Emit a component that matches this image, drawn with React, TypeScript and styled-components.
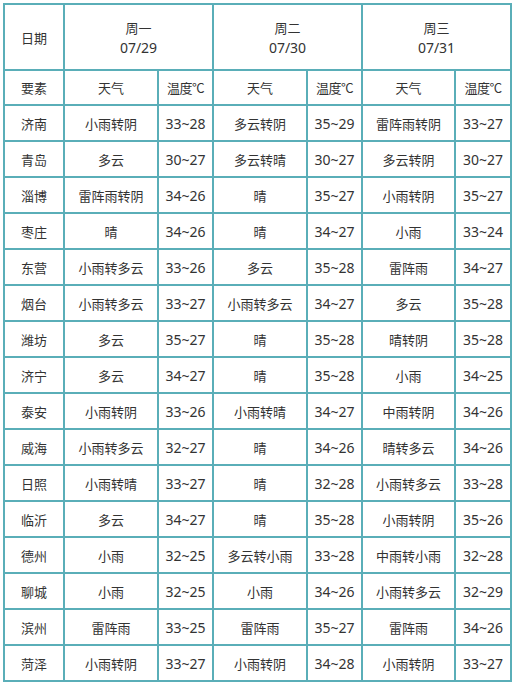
import React from 'react';
import styled, { createGlobalStyle } from 'styled-components';

const GlobalStyle = createGlobalStyle`
    html, body {
        margin: 0;
        padding: 0;
        background: #ffffff;
    }
    body {
        font-family: "Noto Sans CJK SC", "DejaVu Sans", sans-serif;
        color: #333333;
    }
`;

type Day = { week: string; date: string };

const days: Day[] = [
    { week: "周一", date: "07/29" },
    { week: "周二", date: "07/30" },
    { week: "周三", date: "07/31" },
];

const rows: [string, string[]][] = [
    ["济南", ["小雨转阴", "33~28", "多云转阴", "35~29", "雷阵雨转阴", "33~27"]],
    ["青岛", ["多云", "30~27", "多云转晴", "30~27", "多云转阴", "30~27"]],
    ["淄博", ["雷阵雨转阴", "34~26", "晴", "35~27", "小雨转阴", "35~27"]],
    ["枣庄", ["晴", "34~26", "晴", "34~27", "小雨", "33~24"]],
    ["东营", ["小雨转多云", "33~26", "多云", "35~28", "雷阵雨", "34~27"]],
    ["烟台", ["小雨转多云", "33~27", "小雨转多云", "34~27", "多云", "35~28"]],
    ["潍坊", ["多云", "35~27", "晴", "35~28", "晴转阴", "35~28"]],
    ["济宁", ["多云", "34~27", "晴", "35~28", "小雨", "34~25"]],
    ["泰安", ["小雨转阴", "33~26", "小雨转晴", "34~27", "中雨转阴", "34~26"]],
    ["威海", ["小雨转多云", "32~27", "晴", "34~26", "晴转多云", "34~26"]],
    ["日照", ["小雨转晴", "33~27", "晴", "32~28", "小雨转多云", "33~28"]],
    ["临沂", ["多云", "34~27", "晴", "35~28", "小雨转阴", "35~26"]],
    ["德州", ["小雨", "32~25", "多云转小雨", "33~28", "中雨转小雨", "32~28"]],
    ["聊城", ["小雨", "32~25", "小雨", "34~26", "小雨转多云", "32~29"]],
    ["滨州", ["雷阵雨", "33~25", "雷阵雨", "35~27", "雷阵雨", "34~26"]],
    ["菏泽", ["小雨转阴", "33~27", "小雨转阴", "34~28", "小雨转阴", "33~27"]],
];

const colWidths = [60, 94, 55, 94, 55, 93, 56];

const App = () => {
    return (
        <Page>
            <GlobalStyle />
            <Table>
                <colgroup>
                    {colWidths.map((w, i) => (
                        <col key={i} style={{ width: w }} />
                    ))}
                </colgroup>
                <thead>
                    <tr>
                        <DateCell>日期</DateCell>
                        {days.map((d) => (
                            <DateCell key={d.date} colSpan={2}>
                                <DayName>{d.week}</DayName>
                                <DayDate>{d.date}</DayDate>
                            </DateCell>
                        ))}
                    </tr>
                    <tr>
                        <LabelCell>要素</LabelCell>
                        {days.map((d) => (
                            <React.Fragment key={d.date}>
                                <LabelCell>天气</LabelCell>
                                <LabelCell tight>温度°C</LabelCell>
                            </React.Fragment>
                        ))}
                    </tr>
                </thead>
                <tbody>
                    {rows.map(([city, values]) => (
                        <tr key={city}>
                            <Cell>{city}</Cell>
                            {values.map((v, i) => (
                                <Cell key={i} number={i % 2 === 1}>{v}</Cell>
                            ))}
                        </tr>
                    ))}
                </tbody>
            </Table>
        </Page>
    );
};

export const Page = styled.div`
    padding: 3px 0 0 3px;
    width: 513px;
    height: 684px;
    box-sizing: border-box;
    overflow: hidden;
`;

export const Table = styled.table`
    width: 508px;
    table-layout: fixed;
    border-collapse: collapse;
    border: 2px solid #5aaeb8;
    font-size: 13px;
`;

export const DateCell = styled.th`
    height: 64px;
    border: 2px solid #5aaeb8;
    font-weight: normal;
    text-align: center;
    vertical-align: middle;
    padding: 0;
    line-height: 19px;
`;

export const DayName = styled.div`
    font-size: 13px;
`;

export const DayDate = styled.div`
    font-family: "Noto Sans", "DejaVu Sans", sans-serif;
    font-size: 14px;
    margin-top: 1px;
`;

export const LabelCell = styled.th<{ tight?: boolean }>`
    height: 33px;
    border: 2px solid #5aaeb8;
    font-weight: normal;
    text-align: center;
    padding: 0;
    white-space: nowrap;
    letter-spacing: ${(p) => (p.tight ? '-0.5px' : '0')};
`;

export const Cell = styled.td<{ number?: boolean }>`
    height: 34px;
    border: 2px solid #5aaeb8;
    text-align: center;
    padding: 0;
    white-space: nowrap;
    font-family: ${(p) =>
        p.number
            ? '"Noto Sans", "DejaVu Sans", sans-serif'
            : '"Noto Sans CJK SC", sans-serif'};
    font-size: ${(p) => (p.number ? '14px' : '13px')};
`;

export default App;
